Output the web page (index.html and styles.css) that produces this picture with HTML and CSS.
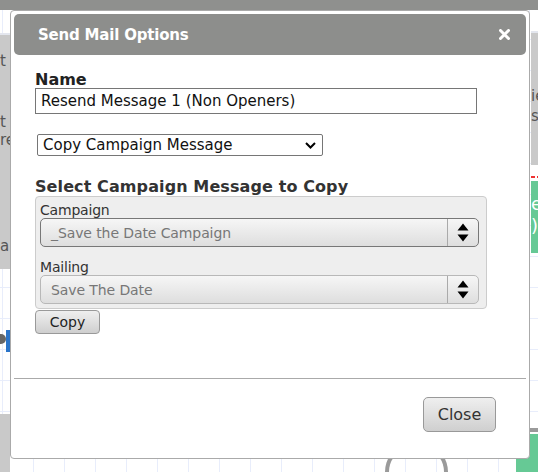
FILE: index.html
```html
<!DOCTYPE html>
<html>
<head>
<meta charset="utf-8">
<link rel="stylesheet" href="styles.css">
</head>
<body>
<div class="stage">
<div class="backdrop">
  <div class="bg-top"></div>
  <div class="bg-left"><span class="t1">t</span><span class="t2">t</span><span class="t3">re</span><span class="t4">a</span></div>
  <div class="bg-left-low"></div>
  <div class="bg-dot"></div>
  <div class="bg-bar"></div>
  <div class="bg-right"><span class="r1">ie</span><span class="r2">ss</span></div>
  <div class="bg-red"></div>
  <div class="bg-green"><span>e</span><span>)</span></div>
  <div class="bg-grayline"></div>
  <div class="bg-green2"></div>
  <div class="bg-arc a1"></div>
  <div class="bg-arc a2"></div>
</div>

<div class="dialog">
  <div class="titlebar">
    <span class="title">Send Mail Options</span>
    <svg class="close-x" width="11" height="11" viewBox="0 0 11 11"><path d="M1.5 1.5 L9.5 9.5 M9.5 1.5 L1.5 9.5" stroke="#fff" stroke-width="3" stroke-linecap="round"/></svg>
  </div>
  <div class="content">
    <div class="label-big">Name</div>
    <div class="textbox">Resend Message 1 (Non Openers)</div>
    <div class="native-select">
      <span>Copy Campaign Message</span>
      <svg class="chev" width="11" height="7" viewBox="0 0 11 7"><path d="M1 1 L5.5 5.5 L10 1" fill="none" stroke="#000" stroke-width="2"/></svg>
    </div>
    <div class="label-big sub">Select Campaign Message to Copy</div>
    <div class="panel">
      <div class="field-label">Campaign</div>
      <div class="fancy-select">
        <span class="value">_Save the Date Campaign</span>
        <span class="arrows"><svg width="12" height="19" viewBox="0 0 12 19"><path d="M6 0.5 L11.5 7.5 L0.5 7.5 Z M0.5 11.5 L11.5 11.5 L6 18.5 Z" fill="#000"/></svg></span>
      </div>
      <div class="field-label">Mailing</div>
      <div class="fancy-select light">
        <span class="value">Save The Date</span>
        <span class="arrows"><svg width="12" height="19" viewBox="0 0 12 19"><path d="M6 0.5 L11.5 7.5 L0.5 7.5 Z M0.5 11.5 L11.5 11.5 L6 18.5 Z" fill="#000"/></svg></span>
      </div>
    </div>
    <div class="btn small">Copy</div>
  </div>
  <div class="sep"></div>
  <div class="footer">
    <div class="btn big">Close</div>
  </div>
</div>
</div>
</body>
</html>
```

FILE: styles.css
```css
html, body {
  margin: 0;
  padding: 0;
}
body {
  font-family: "DejaVu Sans", Verdana, sans-serif;
  background: #fff;
}
.stage {
  width: 538px;
  height: 472px;
  position: relative;
  overflow: hidden;
  background-color: #fff;
  background-image:
    linear-gradient(to right, #e8edfb 1px, transparent 1px),
    linear-gradient(to bottom, #e8edfb 1px, transparent 1px);
  background-size: 31px 31px;
  background-position: 2px 8px;
}
.backdrop div { position: absolute; }
.bg-top { left: 0; top: 0; width: 538px; height: 10px; background: #8f908e; }
.bg-left { left: 0; top: 33px; width: 10px; height: 234px; background: #c9c9c9; border-top: 2px solid #e3e6ee; font-size: 15px; color: #555; overflow: hidden; }
.bg-left span { position: absolute; left: 0; }
.t1 { top: 17px; } .t2 { top: 78px; } .t3 { top: 96px; } .t4 { top: 202px; }
.bg-left-low { left: 0; top: 414px; width: 10px; height: 58px; background: #c9c9c9; }
.bg-dot { left: -4px; top: 334px; width: 10px; height: 10px; border-radius: 50%; background: #666; }
.bg-bar { left: 6px; top: 330px; width: 4px; height: 22px; background: #2a74c9; }
.bg-right { left: 531px; top: 31px; width: 7px; height: 132px; background: #c9c9c9; border-top: 2px solid #e3e6ee; font-size: 15px; color: #555; overflow: hidden; }
.bg-right span { position: absolute; left: 0; }
.r1 { top: 54px; } .r2 { top: 74px; }
.bg-red { left: 531px; top: 176px; width: 7px; height: 2px; background: repeating-linear-gradient(to right, #e33 0 4px, transparent 4px 6px); }
.bg-green { left: 531px; top: 181px; width: 7px; height: 72px; background: #66c995; color: #fff; font-size: 18px; overflow: hidden; }
.bg-green span { position: absolute; left: 0; }
.bg-green span:first-child { top: 12px; }
.bg-green span:last-child { top: 34px; }
.bg-grayline { left: 527px; top: 428px; width: 11px; height: 4px; background: #9a9a9a; }
.bg-green2 { left: 516px; top: 434px; width: 22px; height: 38px; background: #66c995; }
.bg-arc { top: 448px; width: 30px; height: 40px; border: 4px solid #9a9a9a; border-radius: 50%; }
.a1 { left: 385px; border-color: transparent transparent transparent #9a9a9a; }
.a2 { left: 410px; border-color: transparent #9a9a9a transparent transparent; }

.dialog {
  position: absolute;
  left: 10px;
  top: 10px;
  width: 512px;
  height: 441px;
  padding: 3px;
  background: #fff;
  border: 1px solid #aaa;
  border-radius: 4px;
  display: flex;
  flex-direction: column;
}
.titlebar {
  height: 41px;
  flex: none;
  background: #8d8e8c;
  border-radius: 5px;
  display: flex;
  align-items: center;
  justify-content: space-between;
  padding: 0 16px 0 24px;
  color: #fff;
}
.title {
  font-weight: bold;
  font-size: 15px;
  letter-spacing: -0.2px;
}
.close-x { display: block; }
.content {
  padding: 17px 0 0 21px;
}
.label-big {
  font-weight: bold;
  font-size: 16px;
  color: #222;
  line-height: 16px;
}
.label-big.sub {
  margin-top: 23px;
  font-size: 16px;
  letter-spacing: 0.1px;
  color: #333;
}
.textbox {
  width: 442px;
  height: 26px;
  box-sizing: border-box;
  border: 1px solid #767676;
  font-size: 15px;
  line-height: 24px;
  padding-left: 5px;
  color: #111;
}
.native-select {
  margin: 20px 0 0 2px;
  width: 286px;
  height: 22px;
  box-sizing: border-box;
  border: 1px solid #767676;
  border-radius: 2px;
  display: flex;
  align-items: center;
  justify-content: space-between;
  padding: 0 6px 0 5px;
  font-size: 15px;
  color: #111;
}
.chev { display: block; }
.panel {
  margin-top: 1px;
  width: 452px;
  box-sizing: border-box;
  height: 113px;
  background: #eee;
  border: 1px solid #ccc;
  border-radius: 4px;
  padding: 5px 7px 0 4px;
}
.field-label {
  font-size: 14px;
  color: #333;
  line-height: 16px;
  letter-spacing: -0.2px;
}
.fancy-select {
  height: 29px;
  box-sizing: border-box;
  border: 1px solid #777;
  border-radius: 5px;
  background: linear-gradient(to bottom, #f6f6f6, #dedede);
  display: flex;
  align-items: center;
  justify-content: space-between;
  margin-bottom: 12px;
}
.fancy-select.light { border-color: #b8b8b8; margin-bottom: 0; }
.fancy-select .value {
  padding-left: 10px;
  font-size: 14px;
  color: #777;
  letter-spacing: -0.1px;
}
.arrows {
  width: 30px;
  height: 100%;
  border-left: 1px solid #aaa;
  display: flex;
  align-items: center;
  justify-content: center;
}
.arrows svg { display: block; }
.btn {
  box-sizing: border-box;
  border: 1px solid #999;
  background: linear-gradient(to bottom, #efefef, #cfcfcf);
  display: flex;
  align-items: center;
  justify-content: center;
  color: #222;
}
.btn.small {
  width: 65px;
  height: 24px;
  border-radius: 4px;
  font-size: 14px;
  margin-top: 1px;
}
.sep {
  margin-top: 44px;
  height: 1px;
  flex: none;
  background: #aaa;
}
.footer {
  display: flex;
  justify-content: flex-end;
  padding: 18px 30px 0 0;
}
.btn.big {
  width: 73px;
  height: 35px;
  border-radius: 5px;
  font-size: 16px;
  color: #333;
}
```
